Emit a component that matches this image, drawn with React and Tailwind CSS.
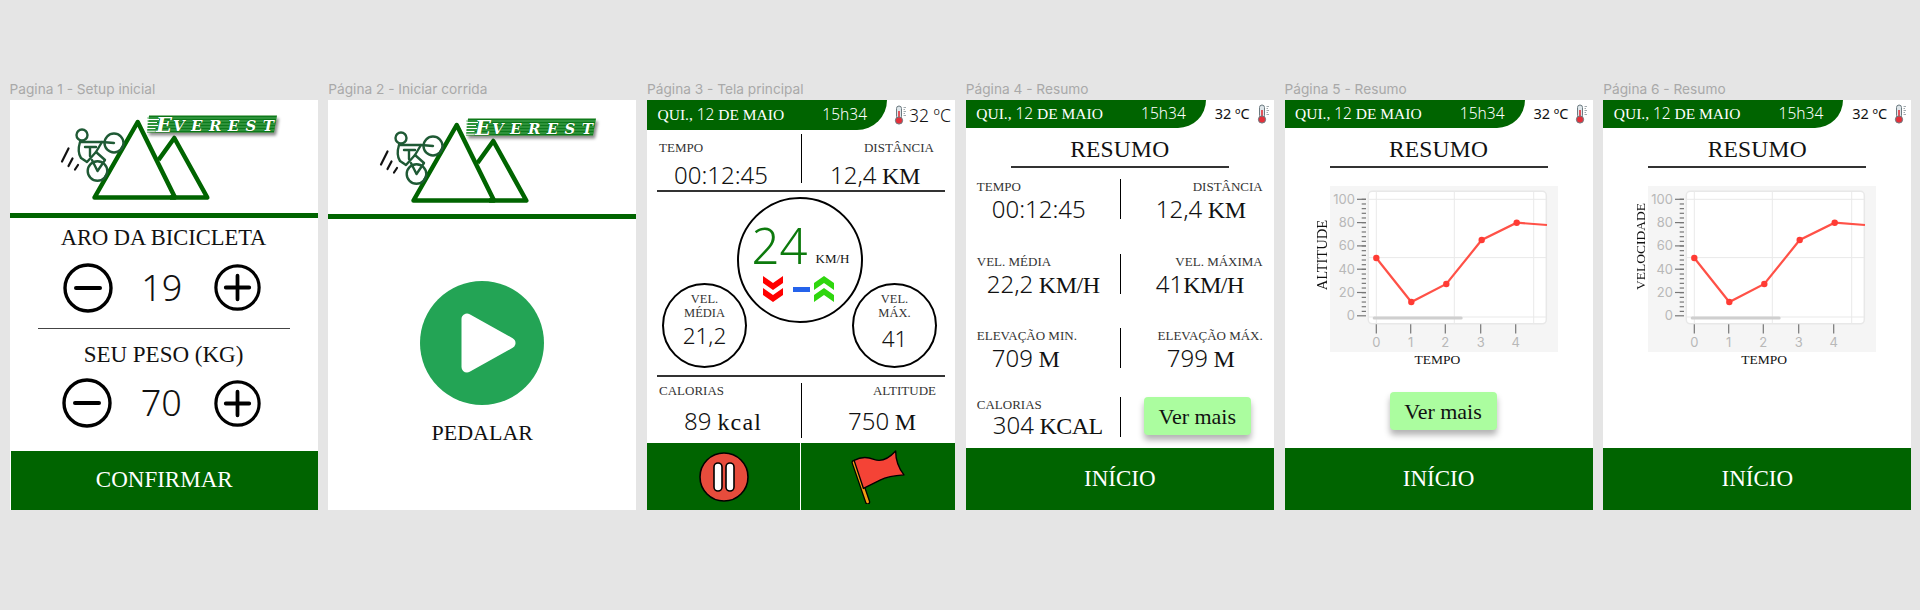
import React from 'react';

const GREEN = '#006400';

// digits in sans, letters in serif
const Mix = ({ text, tight = true }) => (
  <>
    {text.split(/(\d[\d:,]*(?:h\d+)?)/).map((part, i) =>
      /^\d/.test(part) ? <span key={i} className="font-['Noto_Sans',sans-serif] font-light">{part}</span> : <span key={i} className={tight ? 'tracking-[-0.5px]' : ''}>{part}</span>
    )}
  </>
);

const Thermometer = ({ className }) => (
  <svg viewBox="0 0 14 20" className={className}>
    <rect x="3.5" y="1" width="5" height="13" rx="2.5" fill="#dfe6ea" stroke="#6b7a80" strokeWidth="1" />
    <rect x="5.2" y="6" width="1.6" height="9" fill="#e5303a" />
    <circle cx="6" cy="15.5" r="3.6" fill="#e5303a" stroke="#6b7a80" strokeWidth="1" />
    <path d="M10.5 2.5h2.5M10.5 4.5h1.5M10.5 6.5h2.5M10.5 8.5h1.5M10.5 10.5h2.5" stroke="#8a9499" strokeWidth="0.8" />
  </svg>
);

const Header = ({ iconFirst, tall }) => (
  <div className={`flex items-center ${tall ? 'h-[29.5px]' : 'h-[28px]'}`}>
    <div className="flex items-center justify-between h-full w-[240px] bg-[#006400] rounded-br-[30px] pl-[10.5px] pr-[20px] text-white text-[15.5px] whitespace-nowrap">
      <span><Mix text="QUI., 12 DE MAIO" tight={false} /></span>
      <span className="font-['Noto_Sans',sans-serif] font-light">15h34</span>
    </div>
    {iconFirst ? (
      <div className="flex items-center ml-[6px]">
        <Thermometer className="w-[14px] h-[20px]" />
        <span className="ml-[2px] text-[17.5px] text-[#111] font-['Noto_Sans',sans-serif] font-light whitespace-nowrap">32 ºC</span>
      </div>
    ) : (
      <div className="flex items-center ml-[9px]">
        <span className="text-[14.5px] text-[#111] font-['Noto_Sans',sans-serif] whitespace-nowrap">32 ºC</span>
        <Thermometer className="w-[14px] h-[20px] ml-[6px]" />
      </div>
    )}
  </div>
);

const Logo = () => (
  <svg viewBox="0 0 240 110" className="w-[240px] h-[110px] block">
    <defs>
      <filter id="sh" x="-10%" y="-30%" width="120%" height="190%">
        <feDropShadow dx="2" dy="3" stdDeviation="1.6" floodColor="#000" floodOpacity="0.45" />
      </filter>
    </defs>
    <path d="M44.5 97.5 L87.7 22 L125 97.5 Z" fill="none" stroke={GREEN} strokeWidth="4.5" strokeLinejoin="round" />
    <path d="M108.5 60 L124.3 38 L157.3 97.5 L120 97.5" fill="none" stroke={GREEN} strokeWidth="4.5" strokeLinejoin="round" />
    <g fill="none" stroke="#1f5a35" strokeWidth="2.4" strokeLinecap="round" strokeLinejoin="round">
      <circle cx="32" cy="35" r="5.5" />
      <circle cx="64" cy="43" r="9.5" />
      <circle cx="47.5" cy="71" r="9.8" />
      <path d="M30 42 L52 42 L64 43 M30 42 Q27 52 31 58 L37 62 L46 52 L55 60 L47.5 71 L42 60" />
      <path d="M35 47 L46 47 M40 47 L40 56 M52 42 L46 52" />
    </g>
    <path d="M12 61.5 L18.5 48.5 M18.5 66 L22.5 58.5 M25 69.5 L28 65" stroke="#111" strokeWidth="2.2" strokeLinecap="round" />
    <g filter="url(#sh)">
      <path d="M99 15.5 H227 L224 32.5 H97 Z" fill="#117a1a" />
    </g>
    <path d="M97 18h130M97 21h130M97 24h128M97 27h128M97 30h127" stroke="#63b96c" strokeWidth="0.8" />
    <path d="M97 19.5h12M97 22.5h10M96.5 25.5h12M96.5 28.5h9M96.5 31.2h11" stroke="#fff" strokeWidth="1.1" />
    <text x="106" y="31.5" fill="#fff" fontFamily="'DejaVu Serif', serif" fontWeight="700" fontStyle="italic" fontSize="21" stroke={GREEN} strokeWidth="0.7" paintOrder="stroke">E</text>
    <text x="123" y="30.5" textLength="101" fill="#fff" fontFamily="'DejaVu Serif', serif" fontWeight="700" fontStyle="italic" fontSize="15" stroke={GREEN} strokeWidth="0.7" paintOrder="stroke">VEREST</text>
  </svg>
);

const Minus = ({ plus, className }) => (
  <svg viewBox="0 0 50 50" className={className}>
    <circle cx="25" cy="25" r="23" fill="none" stroke="#000" strokeWidth="3.4" />
    <path d={plus ? 'M12.5 25h25M25 12.5v25' : 'M13 25h24'} stroke="#000" strokeWidth="4" strokeLinecap="round" />
  </svg>
);

const Stepper = ({ value, left = 53 }) => (
  <div className="flex items-center h-[50px]" style={{ paddingLeft: left }}>
    <Minus className="w-[50px] h-[50px] shrink-0" />
    <div className="flex-none pr-[3px] text-center text-[36px] leading-none font-['Noto_Sans',sans-serif] font-light text-[#111]" style={{ width: 154.5 - left }}>{value}</div>
    <Minus plus className="w-[47px] h-[47px] shrink-0" />
  </div>
);

const BottomBar = ({ label, className }) => (
  <div className={`mt-auto flex items-center justify-center bg-[#006400] text-white text-[23px] ${className}`}>{label}</div>
);

const Frame = ({ title, children }) => (
  <div className="w-[308px] shrink-0">
    <div className="h-[19px] text-[13.7px] leading-[17px] text-[#a9a9a9] font-['Inter',sans-serif] whitespace-nowrap">{title}</div>
    <div className="flex flex-col h-[410px] bg-white text-[#111]">{children}</div>
  </div>
);

const Chevrons = ({ up, color }) => (
  <svg viewBox="0 0 20 26" className="w-[20px] h-[26px]">
    <g fill={color} transform={up ? 'rotate(180 10 13)' : undefined}>
      <path d="M0 0 L10 7 L20 0 V7 L10 14 L0 7 Z" />
      <path d="M0 12 L10 19 L20 12 V19 L10 26 L0 19 Z" />
    </g>
  </svg>
);

const SmallCircle = ({ className, lines, value, valueClass }) => (
  <div className={`w-[85px] h-[85px] shrink-0 rounded-full border-[2.5px] border-black flex flex-col items-center ${className}`}>
    <div className="mt-[7px] text-[12.5px] leading-[14px] text-center text-[#333]">
      {lines.map((l) => <div key={l}>{l}</div>)}
    </div>
    <div className={`text-[22.5px] leading-[24px] font-['Noto_Sans',sans-serif] font-light ${valueClass}`}>{value}</div>
  </div>
);

const PauseIcon = () => (
  <svg viewBox="0 0 50 50" className="w-[50px] h-[50px]">
    <circle cx="25" cy="25" r="24" fill="#e74c3c" stroke="#000" strokeWidth="1.6" />
    <rect x="15" y="11" width="8" height="28" rx="4" fill="#fff" stroke="#000" strokeWidth="1.6" />
    <rect x="27" y="11" width="8" height="28" rx="4" fill="#fff" stroke="#000" strokeWidth="1.6" />
  </svg>
);

const FlagIcon = () => (
  <svg viewBox="0 0 52 52" className="w-[54px] h-[54px]">
    <path d="M3 12 L16 50" stroke="#000" strokeWidth="5" strokeLinecap="round" />
    <path d="M3 12 L16 50" stroke="#f39c12" strokeWidth="2.6" strokeLinecap="round" />
    <path d="M3 10 Q12 5 22 9 T43 1 Q43 14 51 24 Q36 25 28 29 T12 37 Z" fill="#f44336" stroke="#000" strokeWidth="1.3" strokeLinejoin="round" />
  </svg>
);

const Rule = ({ className }) => <div className={`h-[2px] bg-[#333] ${className}`} />;

const Title = () => (
  <>
    <div className="mt-[9px] h-[24px] leading-[24px] text-center text-[23.5px] tracking-[0.2px]">RESUMO</div>
    <Rule className="mx-[45px] mt-[5px]" />
  </>
);

const Stat = ({ label, value, right, valueLeft, gap = 2, className }) => (
  <div className={`relative ${right ? 'text-right pr-[11px]' : 'pl-[11px]'} ${className}`}>
    <div className="text-[13px] leading-[16px] text-[#333] whitespace-nowrap">{label}</div>
    <div className="text-left text-[24px] leading-[24px] whitespace-nowrap" style={{ marginLeft: valueLeft, marginTop: gap }}>
      <Mix text={value} />
    </div>
  </div>
);

const StatRow = ({ left, right, className }) => (
  <div className={`flex h-[40px] ${className}`}>
    <div className="w-[155px] shrink-0 border-r-[1.5px] border-black">
      <Stat {...left} />
    </div>
    <div className="flex-1">{right}</div>
  </div>
);

const points = [[46.3, 72], [81.3, 116], [116.3, 98], [151.7, 54], [186.7, 36.7]];
const minorTicks = Array.from({ length: 25 }, (_, i) => 13.3 + i * 4.67);

const Chart = () => (
  <svg viewBox="0 0 228 166" className="w-[228px] h-[166px] block">
    <rect width="228" height="166" fill="#f5f5f5" />
    <rect x="38.3" y="5.3" width="178" height="132.5" rx="4" fill="#fff" stroke="#e8e8e8" strokeWidth="1.5" />
    <path d="M46.3 5.3V137.8M124.3 5.3V137.8M203.7 5.3V137.8M38.3 13.3H216.3M38.3 71.6H216.3M38.3 131H216.3" stroke="#e9e9e9" strokeWidth="1" />
    <rect x="42.7" y="130.5" width="90" height="3" rx="1.5" fill="#cfcfcf" />
    {minorTicks.map((y) => <path key={y} d={`M31.7 ${y}H36`} stroke="#777" strokeWidth="1.2" />)}
    {[[100, 13.3], [80, 36.6], [60, 59.9], [40, 83.2], [20, 106.5], [0, 129.8]].map(([v, y]) => (
      <g key={v}>
        <path d={`M27 ${y}H36`} stroke="#777" strokeWidth="1.2" />
        <text x="25" y={y + 4.5} textAnchor="end" fontFamily="'Inter', sans-serif" fontSize="13" fill="#b8b8b8">{v}</text>
      </g>
    ))}
    {[46.3, 80.7, 115.3, 150.7, 185.7].map((x, i) => (
      <g key={x}>
        <path d={`M${x} 138.3V147.6`} stroke="#777" strokeWidth="1.2" />
        <text x={x} y="161" textAnchor="middle" fontFamily="'Inter', sans-serif" fontSize="13" fill="#b8b8b8">{i}</text>
      </g>
    ))}
    <polyline points={`${points.map((p) => p.join(',')).join(' ')} 217,39`} fill="none" stroke="#ff5147" strokeWidth="2.2" />
    {points.map(([x, y]) => <circle key={x} cx={x} cy={y} r="3.2" fill="#ff3b34" />)}
  </svg>
);

const ChartBlock = ({ yLabel, labelClass, tempoClass }) => (
  <>
    <div className="relative mt-[18px] ml-[45px] w-[228px]">
      <Chart />
      <div className={`absolute bottom-[62px] left-[-15px] [writing-mode:vertical-rl] rotate-180 leading-[15px] whitespace-nowrap ${labelClass}`}>{yLabel}</div>
    </div>
    <div className={`text-[13.5px] leading-[16px] ${tempoClass}`}>TEMPO</div>
  </>
);

const VerMais = ({ className }) => (
  <div className={`w-[107px] h-[38px] flex items-center justify-center rounded-[4px] bg-[#abfd9f] text-[22px] shadow-[0_5px_6px_rgba(0,0,0,0.3)] ${className}`}>Ver mais</div>
);

export default function App() {
  return (
    <div className="min-h-screen bg-[#e5e5e5] pt-[81px] pl-[9.5px] flex gap-[10.75px] font-['Liberation_Serif',serif]">
      <Frame title="Pagina 1 - Setup inicial">
        <div className="ml-[40.7px]"><Logo /></div>
        <div className="mt-[2.7px] h-[5px] bg-[#006400]" />
        <div className="mt-[8px] text-center text-[22.5px] leading-[24px]">ARO DA BICICLETA</div>
        <div className="mt-[13px]"><Stepper value="19" /></div>
        <div className="mt-[15px] mx-[28px] h-[1.5px] bg-[#444]" />
        <div className="mt-[14px] text-center text-[23px] leading-[24px]">SEU PESO (KG)</div>
        <div className="mt-[11px]"><Stepper value="70" left={52} /></div>
        <BottomBar label="CONFIRMAR" className="h-[59px] ml-[1.5px]" />
      </Frame>

      <Frame title="Página 2 - Iniciar corrida">
        <div className="ml-[40.7px] mt-[2.7px]"><Logo /></div>
        <div className="mt-[1.3px] h-[5px] bg-[#006400]" />
        <svg viewBox="-62 -62 124 124" className="w-[124px] h-[124px] mx-auto mt-[62px] block">
          <circle r="62" fill="#23a455" />
          <path d="M-15 -24 L-15 24 L28 0 Z" fill="#fff" stroke="#fff" strokeWidth="11" strokeLinejoin="round" />
        </svg>
        <div className="mt-[16px] text-center text-[22px] leading-[24px]">PEDALAR</div>
      </Frame>

      <Frame title="Página 3 - Tela principal">
        <Header iconFirst tall />
        <div className="flex h-[49px] mt-[4.5px]">
          <div className="w-[155px] shrink-0 border-r-[1.5px] border-black pl-[12px] pt-[4px]">
            <div className="text-[13px] leading-[20px] text-[#333]">TEMPO</div>
            <div className="ml-[15px] mt-[5px] text-[24px] leading-[24px]"><Mix text="00:12:45" /></div>
          </div>
          <div className="flex-1 pt-[4px] pr-[21px] text-right">
            <div className="text-[13px] leading-[20px] text-[#333]">DISTÂNCIA</div>
            <div className="ml-[28px] mt-[5px] text-left text-[24px] leading-[24px] whitespace-nowrap"><Mix text="12,4 KM" /></div>
          </div>
        </div>
        <Rule className="mx-[10px] mt-[7px]" />
        <div className="flex h-[183px] items-start">
          <SmallCircle className="ml-[15px] mt-[91px]" lines={['VEL.', 'MÉDIA']} value="21,2" valueClass="mt-[4px]" />
          <div className="ml-[-10px] mt-[5px] w-[126px] h-[126px] shrink-0 rounded-full border-[2.5px] border-black flex flex-col items-center">
            <div className="flex items-end h-[60px] mt-[10px] ml-[1px]">
              <span className="text-[#0d7a0d] text-[49px] leading-[48px] font-['Noto_Sans',sans-serif] font-light">24</span>
              <span className="ml-[8px] mb-[2px] text-[13px] leading-[16px]">KM/H</span>
            </div>
            <div className="flex items-center mt-[7px] mr-[4px]">
              <Chevrons color="#ff0000" />
              <div className="ml-[10px] w-[17px] h-[5px] bg-[#2563eb]" />
              <div className="ml-[4px]"><Chevrons up color="#2fd60e" /></div>
            </div>
          </div>
          <SmallCircle className="ml-[-11px] mt-[91px]" lines={['VEL.', 'MÁX.']} value="41" valueClass="mt-[7px]" />
        </div>
        <Rule className="mx-[10px]" />
        <div className="flex h-[55px] mt-[6px]">
          <div className="w-[155px] shrink-0 border-r-[1.5px] border-black pl-[12px]">
            <div className="text-[13px] leading-[16px] text-[#333]">CALORIAS</div>
            <div className="ml-[25px] mt-[10px] text-[24px] leading-[24px]">
              <Mix text="89" /> <span className="tracking-[1.2px]">kcal</span>
            </div>
          </div>
          <div className="flex-1 text-right pr-[19px]">
            <div className="text-[13px] leading-[16px] text-[#333]">ALTITUDE</div>
            <div className="ml-[46px] mt-[10px] text-left text-[24px] leading-[24px] whitespace-nowrap"><Mix text="750 M" /></div>
          </div>
        </div>
        <div className="mt-auto flex h-[67px] bg-[#006400]">
          <div className="w-[154px] shrink-0 border-r-[1.5px] border-white flex items-center justify-center">
            <PauseIcon />
          </div>
          <div className="flex-1 flex items-center justify-center">
            <FlagIcon />
          </div>
        </div>
      </Frame>

      <Frame title="Página 4 - Resumo">
        <Header />
        <Title />
        <StatRow
          className="mt-[11px]"
          left={{ label: 'TEMPO', value: '00:12:45', valueLeft: 15 }}
          right={<Stat right label="DISTÂNCIA" value="12,4 KM" valueLeft={35} />}
        />
        <StatRow
          className="mt-[34.5px]"
          left={{ label: 'VEL. MÉDIA', value: '22,2 KM/H', valueLeft: 10 }}
          right={<Stat right label="VEL. MÁXIMA" value="41KM/H" valueLeft={35} />}
        />
        <StatRow
          className="mt-[34.5px]"
          left={{ label: 'ELEVAÇÃO MIN.', value: '709 M', valueLeft: 15 }}
          right={<Stat right label="ELEVAÇÃO MÁX." value="799 M" valueLeft={46} />}
        />
        <StatRow
          className="mt-[29px]"
          left={{ label: 'CALORIAS', value: '304 KCAL', valueLeft: 16, gap: 0 }}
          right={<VerMais className="ml-[23px]" />}
        />
        <BottomBar label="INÍCIO" className="h-[62px]" />
      </Frame>

      <Frame title="Página 5 - Resumo">
        <Header />
        <Title />
        <ChartBlock yLabel="ALTITUDE" labelClass="text-[14.5px]" tempoClass="ml-[130px]" />
        <VerMais className="mt-[24px] ml-[105px]" />
        <BottomBar label="INÍCIO" className="h-[62px]" />
      </Frame>

      <Frame title="Página 6 - Resumo">
        <Header />
        <Title />
        <ChartBlock yLabel="VELOCIDADE" labelClass="text-[13.5px]" tempoClass="ml-[138px]" />
        <BottomBar label="INÍCIO" className="h-[62px]" />
      </Frame>
    </div>
  );
}
